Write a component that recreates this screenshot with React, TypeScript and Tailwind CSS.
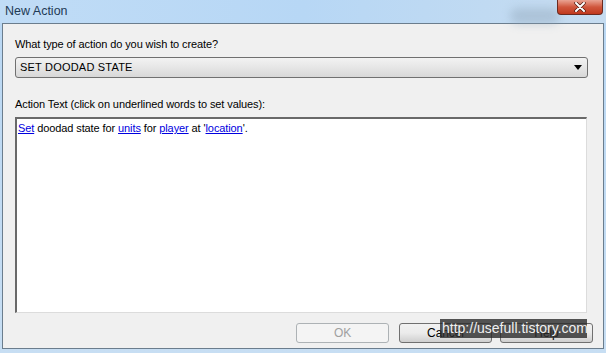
const font = { fontFamily: '"Liberation Sans", Arial, sans-serif' };

function Link({ children }: { children: string }) {
  return <span className="text-[#0000e0] underline underline-offset-1">{children}</span>;
}

function Button({ label, disabled }: { label: string; disabled?: boolean }) {
  return (
    <div
      className={
        disabled
          ? "flex h-[20px] w-[93px] items-center justify-center rounded-[3px] border border-[#adb2b5] bg-[#f4f4f4] text-[12px] text-[#a0a0a0]"
          : "flex h-[20px] w-[93px] items-center justify-center rounded-[3px] border border-[#707070] bg-gradient-to-b from-[#f2f2f2] via-[#ebebeb] to-[#cfcfcf] text-[12px] text-black"
      }
    >
      {label}
    </div>
  );
}

export default function App() {
  return (
    <div
      className="relative flex h-[353px] w-[606px] flex-col overflow-hidden bg-gradient-to-b from-[#b9d7f3] to-[#c7def3]"
      style={font}
    >
      {/* title bar */}
      <div className="relative flex h-[23px] shrink-0 items-center bg-gradient-to-r from-[#c0dcf6] via-[#b7d7f5] to-[#c6dcf0] pl-[5px]">
        <span className="text-[12.5px] text-[#1e3a55]">New Action</span>
        <div className="absolute left-[510px] top-[8px] h-[16px] w-[50px] rounded-full bg-[#8a9fb3] opacity-40 blur-[5px]" />
        <div className="absolute right-[3px] top-0 flex h-[15px] w-[46px] items-center justify-center rounded-b-[4px] border border-t-0 border-[#6b2a20] bg-gradient-to-b from-[#e9a393] via-[#d0563d] to-[#c0391d]">
          <svg width="12" height="10" viewBox="0 0 12 10">
            <path d="M2 1 L10 9 M10 1 L2 9" stroke="#4a1a12" strokeWidth="3.4" strokeLinecap="round" />
            <path d="M2 1 L10 9 M10 1 L2 9" stroke="#ffffff" strokeWidth="2" strokeLinecap="round" />
          </svg>
        </div>
      </div>

      {/* client area */}
      <div className="mx-[2px] mb-[4px] flex flex-1 flex-col border border-[#6b7d8d] bg-[#f0f0f0] pl-[12px] pr-[10px] text-[11px] tracking-[-0.1px] text-black">
        <div className="mt-[13px] h-[15px] leading-[15px]">What type of action do you wish to create?</div>
        <div className="mr-[5px] mt-[5px] flex h-[21px] items-center justify-between rounded-[3px] border border-[#707070] bg-gradient-to-b from-[#f3f3f3] via-[#e6e6e6] to-[#d8d8d8] pl-[4px] pr-[5px]">
          <span className="tracking-[0.2px]">SET DOODAD STATE</span>
          <svg width="8" height="5" viewBox="0 0 8 5">
            <path d="M0 0 H8 L4 5 Z" fill="#000" />
          </svg>
        </div>
        <div className="mt-[19px] h-[15px] leading-[15px]">Action Text (click on underlined words to set values):</div>
        <div className="mr-[6px] mt-[5px] h-[196px] border-l-2 border-t-2 border-r border-b border-l-[#696969] border-t-[#696969] border-r-[#dcdcdc] border-b-[#dcdcdc] bg-white pl-[1px] pt-[2px] leading-[15px]">
          <Link>Set</Link> doodad state for <Link>units</Link> for <Link>player</Link> at '<Link>location</Link>'.
        </div>
        <div className="mt-[10px] flex justify-end">
          <Button label="OK" disabled />
          <div className="w-[10px]" />
          <Button label="Cancel" />
          <div className="w-[8px]" />
          <Button label="Help" />
        </div>
      </div>

      {/* watermark */}
      <div className="absolute left-[440px] top-[319px] flex h-[19px] w-[147px] items-center whitespace-nowrap bg-[#2a2a2a]/80 pl-[2px] text-[14px] text-[#f0f0f0]">
        http://usefull.tistory.com
      </div>
    </div>
  );
}
